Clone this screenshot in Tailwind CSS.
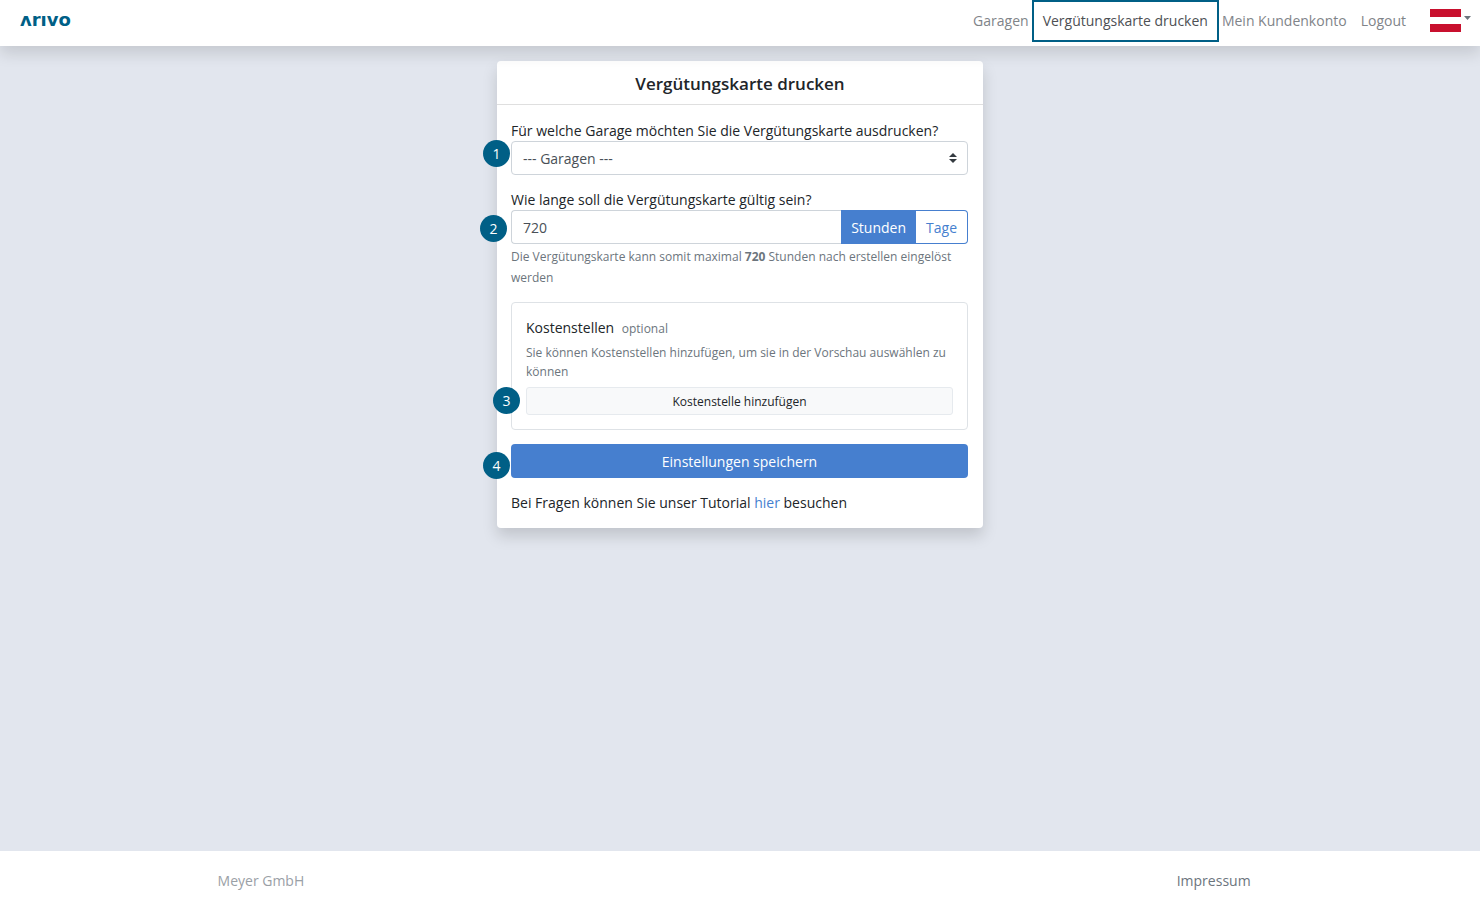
<!DOCTYPE html>
<html lang="de">
<head>
    <meta charset="UTF-8">
    <meta name="viewport" content="width=device-width, initial-scale=1.0">
    <title>Vergütungskarte drucken</title>
    <script src="https://cdn.jsdelivr.net/npm/@tailwindcss/browser@4"></script>
</head>

<body class="min-h-screen flex flex-col bg-[#e2e6ee] font-['Open_Sans',sans-serif] text-[14px] leading-[21px] text-[#212529]">
    <header class="relative h-[46px] pl-5 pr-[9px] flex justify-between items-center bg-white shadow-[0_8px_15px_rgba(0,0,0,0.12)]">
        <a href="/" aria-label="Arivo" class="pb-2 font-['DejaVu_Sans',sans-serif] font-bold text-[18px] text-[#005f86]">ʌrıvo</a>
        <nav class="pb-[6px] flex items-center gap-[14px] text-[#7f8489]">
            <a href="#garagen">Garagen</a>
            <a href="#drucken" class="relative text-[#4d5054]">Vergütungskarte drucken
                <span class="absolute -inset-x-[11px] -top-[10px] -bottom-[11px] border-2 border-[#005f86]"></span>
            </a>
            <a href="#konto">Mein Kundenkonto</a>
            <a href="#logout">Logout</a>
            <button type="button" aria-label="Sprache" class="ml-[10px] flex items-center gap-[3px]">
                <svg class="w-[31px] h-[23px]" viewBox="0 0 31 23">
                    <rect width="31" height="23" fill="#fff"/>
                    <rect width="31" height="8" fill="#c8102e"/>
                    <rect y="15" width="31" height="8" fill="#c8102e"/>
                </svg>
                <svg class="w-[7px] h-1 mb-1" viewBox="0 0 7 4"><path d="M0 0h7L3.500 4z" fill="#6c757d"/></svg>
            </button>
        </nav>
    </header>

    <main class="grow px-4 pt-[15px]">
        <div class="w-full max-w-[486px] mx-auto bg-white rounded-[4px] shadow-[0_8px_15px_rgba(0,0,0,0.15)]">
            <h1 class="pt-3 pb-[9px] border-b border-[#dfdfdf] text-center text-[17px] leading-[22px] font-semibold">Vergütungskarte drucken</h1>

            <form class="pl-[14px] pr-[15px] py-[15px] flex flex-col gap-[14px]">
                <div class="relative">
                    <span class="absolute top-[20px] -left-7 size-[27px] rounded-full bg-[#005f86] text-white text-center leading-[27px]">1</span>
                    <label for="garage" class="block">Für welche Garage möchten Sie die Vergütungskarte ausdrucken?</label>
                    <div class="relative">
                        <select id="garage" class="w-full h-[34px] px-[11px] appearance-none border border-[#ced4da] rounded-[4px] bg-white text-[#495057]">
                            <option>--- Garagen ---</option>
                        </select>
                        <svg class="absolute right-[11px] top-3 w-2 h-[10px] pointer-events-none" viewBox="0 0 4 5"><path d="M2 0L0 2h4zm0 5L0 3h4z" fill="#343a40"/></svg>
                    </div>
                </div>

                <div class="relative">
                    <span class="absolute top-[26px] -left-[31px] size-[27px] rounded-full bg-[#005f86] text-white text-center leading-[27px]">2</span>
                    <label for="dauer" class="block">Wie lange soll die Vergütungskarte gültig sein?</label>
                    <div class="flex h-[34px]">
                        <input id="dauer" type="text" value="720" class="grow min-w-0 px-[11px] border border-r-0 border-[#ced4da] rounded-l-[4px] text-[#495057]">
                        <button type="button" class="px-[10px] bg-[#467fcf] text-white">Stunden</button>
                        <button type="button" class="px-[10px] border border-l-0 border-[#467fcf] rounded-r-[4px] text-[#467fcf]">Tage</button>
                    </div>
                    <p class="pt-[2px] text-[12px] leading-[21px] text-[#6c757d]">Die Vergütungskarte kann somit maximal <b>720</b> Stunden nach erstellen eingelöst werden</p>
                </div>

                <div class="relative p-[14px] border border-[#dee2e6] rounded-[4px]">
                    <span class="absolute top-[84px] -left-[19px] size-[27px] rounded-full bg-[#005f86] text-white text-center leading-[27px]">3</span>
                    <h2>Kostenstellen <small class="ml-1 text-[12px] text-[#6c757d]">optional</small></h2>
                    <p class="mt-1 mb-[6px] text-[12px] leading-[19px] text-[#6c757d]">Sie können Kostenstellen hinzufügen, um sie in der Vorschau auswählen zu können</p>
                    <button type="button" class="w-full h-7 border border-[#e6eaee] rounded-[3px] bg-[#f8f9fa] text-[12px]">Kostenstelle hinzufügen</button>
                </div>

                <div class="relative">
                    <span class="absolute top-2 -left-7 size-[27px] rounded-full bg-[#005f86] text-white text-center leading-[27px]">4</span>
                    <button type="submit" class="w-full h-[34px] rounded-[4px] bg-[#467fcf] text-white">Einstellungen speichern</button>
                </div>

                <p>Bei Fragen können Sie unser Tutorial <a href="#tutorial" class="text-[#467fcf]">hier</a> besuchen</p>
            </form>
        </div>
    </main>

    <footer class="pt-[19px] pb-[13px] pl-[14.7%] pr-[15.5%] flex justify-between bg-white">
        <span class="text-[#9aa0a6]">Meyer GmbH</span>
        <a href="#impressum" class="text-[#6c757d]">Impressum</a>
    </footer>
</body>
</html>
